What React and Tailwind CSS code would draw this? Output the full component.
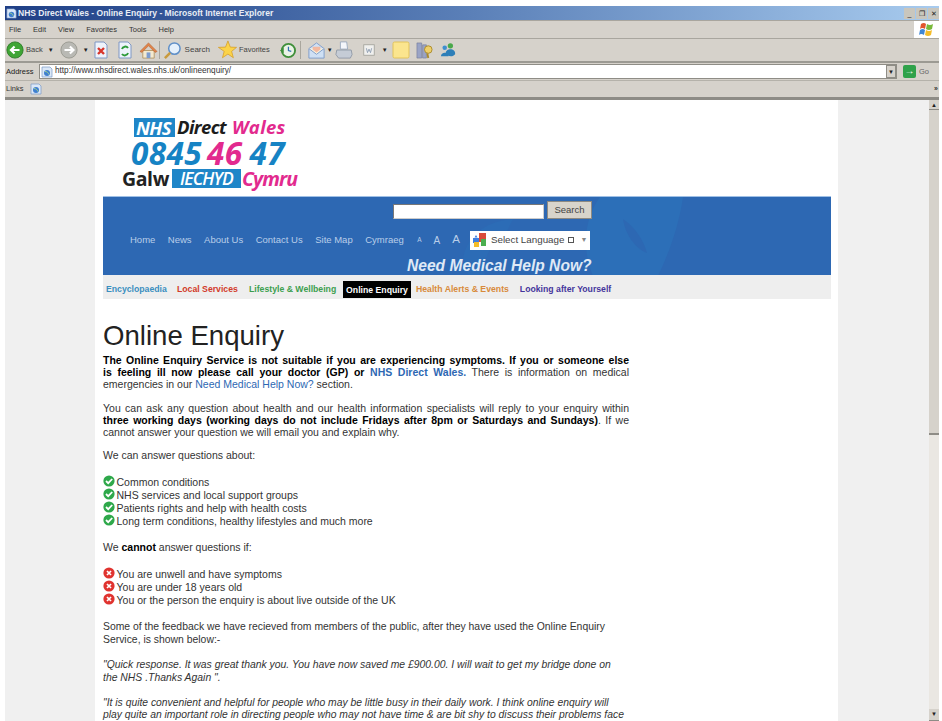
import React from "react";

const sans = "font-['Liberation_Sans',Arial,sans-serif]";

// Browser toolbar glyphs
const BackIcon = ({ disabled }) => (
  <svg width="18" height="18" viewBox="0 0 20 20">
    <circle cx="10" cy="10" r="9" fill={disabled ? "#b9b9b4" : "#3fa535"} stroke={disabled ? "#97978f" : "#2c7a27"} />
    <path d={disabled ? "M5 10h9M11 6l4 4-4 4" : "M15 10H6M9.5 6l-4 4 4 4"} stroke="#fff" strokeWidth="2.4" fill="none" />
  </svg>
);
const PageIcon = ({ color, kind }) => (
  <svg width="16" height="18" viewBox="0 0 16 18">
    <path d="M2 1h9l3 3v13H2z" fill="#eef3fb" stroke="#7f97c4" />
    {kind === "x" ? (
      <path d="M5 7l6 6M11 7l-6 6" stroke={color} strokeWidth="2.4" />
    ) : (
      <path d="M5 8a3.4 3.4 0 0 1 6-1M11 12a3.4 3.4 0 0 1-6 1" stroke={color} strokeWidth="2" fill="none" />
    )}
  </svg>
);
const HomeIcon = () => (
  <svg width="19" height="19" viewBox="0 0 20 20">
    <path d="M4 10v8h12v-8z" fill="#f4ead0" stroke="#b59a6a" />
    <path d="M1 11l9-9 9 9-2 1-7-7-7 7z" fill="#e2844a" stroke="#b3602e" strokeWidth=".6" />
    <rect x="8" y="12" width="4" height="6" fill="#7d9ccf" />
  </svg>
);
const SearchIcon = () => (
  <svg width="19" height="19" viewBox="0 0 20 20">
    <circle cx="12" cy="8" r="6" fill="#e5f0fb" stroke="#5f8fc8" strokeWidth="1.6" />
    <path d="M7.5 12.5L2 18" stroke="#c99a3c" strokeWidth="2.6" />
  </svg>
);
const StarIcon = () => (
  <svg width="20" height="20" viewBox="0 0 22 22">
    <path d="M12 1l2.6 6.8 6.9.3-5.4 4.4 1.9 7-6-4-6 4 1.9-7L1.5 8.1l7.9-.3z" fill="#fbd34a" stroke="#d39a25" strokeWidth=".8" />
  </svg>
);
const HistoryIcon = () => (
  <svg width="17" height="17" viewBox="0 0 18 18">
    <circle cx="10" cy="9" r="7" fill="#eaf3e6" stroke="#3f8f3a" strokeWidth="2" />
    <path d="M10 5v4l3 1" stroke="#2f6fb0" strokeWidth="1.3" fill="none" />
    <path d="M1 9l4-3v6z" fill="#3f8f3a" />
  </svg>
);
const MailIcon = () => (
  <svg width="19" height="19" viewBox="0 0 20 20">
    <path d="M2 8l8-6 8 6v10H2z" fill="#cfe0f4" stroke="#7f9dc9" />
    <path d="M2 8l8 6 8-6" fill="#f7f1dd" stroke="#7f9dc9" />
    <path d="M6 6h8v3l-4 3-4-3z" fill="#f3b9a0" />
  </svg>
);
const PrintIcon = () => (
  <svg width="18" height="18" viewBox="0 0 20 20">
    <path d="M6 1h7l1 8H6z" fill="#f4f6fa" stroke="#9aa8bd" />
    <path d="M2 10h16l1 5-2 4H4l-3-4z" fill="#c5ccd6" stroke="#8f98a6" />
  </svg>
);
const WordIcon = () => (
  <svg width="14" height="14" viewBox="0 0 16 16">
    <rect x="2" y="2" width="12" height="12" fill="#f0f0ee" stroke="#a4a49c" />
    <path d="M5 6l1.3 5 1.7-4 1.7 4L11 6" stroke="#8a9ab0" fill="none" />
  </svg>
);
const NoteIcon = () => (
  <svg width="18" height="18" viewBox="0 0 18 18">
    <rect x="1" y="1" width="16" height="16" rx="1.5" fill="#fbe58e" stroke="#e2c35a" />
  </svg>
);
const ResearchIcon = () => (
  <svg width="17" height="19" viewBox="0 0 18 20">
    <path d="M1 2h5v16H1zM7 4h4v14H7z" fill="#9aa4c6" stroke="#6d7697" strokeWidth=".6" />
    <circle cx="13" cy="9" r="4" fill="#efd06a" stroke="#a98a2c" />
    <path d="M12 13l1 5" stroke="#a98a2c" strokeWidth="2" />
  </svg>
);
const MessengerIcon = () => (
  <svg width="17" height="17" viewBox="0 0 18 18">
    <circle cx="5" cy="6" r="2.4" fill="#3f8fd0" />
    <circle cx="11" cy="4" r="2.8" fill="#4aa84a" />
    <path d="M1 15c0-5 8-5 8 0zM6 12c0-6 11-6 10 1-2 3-8 3-10-1z" fill="#2e7fb8" />
  </svg>
);
const PageGlobe = ({ size = 12 }) => (
  <svg width={size} height={size} viewBox="0 0 12 12">
    <path d="M1 1h8l2 2v8H1z" fill="#dbe8f8" stroke="#7a98c6" strokeWidth=".7" />
    <circle cx="6" cy="7" r="3" fill="#3f7fd0" />
    <path d="M4 5.5c2 0 3 1 4 3" stroke="#9fd28a" strokeWidth="1" fill="none" />
  </svg>
);
const FlagIcon = () => (
  <svg width="17" height="17" viewBox="0 0 17 17">
    <path d="M3 3q3-2 5 0l-1 5q-3-2-5 0z" fill="#e2552d" />
    <path d="M9 3q3 2 6 0l-1 5q-3 2-6 0z" fill="#79b93a" />
    <path d="M2 9q3-2 5 0l-1 5q-3-2-5 0z" fill="#3f86d4" />
    <path d="M8 9q3 2 6 0l-1 5q-3 2-6 0z" fill="#f4bc2a" />
  </svg>
);
const GoogleMark = () => (
  <svg width="14" height="14" viewBox="0 0 14 14">
    <rect x="6" y="0" width="7" height="9" fill="#d94b3a" />
    <rect x="8" y="6" width="5" height="7" fill="#4caf50" />
    <rect x="0" y="5" width="6" height="5" fill="#3f7fe0" />
    <rect x="1" y="9" width="5" height="5" fill="#f4bc2a" />
    <path d="M3 2l1.5 2.5h-3z" fill="#3f7fe0" />
  </svg>
);
const Check = () => (
  <svg width="12" height="12" viewBox="0 0 12 12" className="shrink-0">
    <circle cx="6" cy="6" r="5.6" fill="#2ea84a" />
    <path d="M3 6l2.2 2.2L9.2 4" stroke="#fff" strokeWidth="1.8" fill="none" />
  </svg>
);
const Cross = () => (
  <svg width="12" height="12" viewBox="0 0 12 12" className="shrink-0">
    <circle cx="6" cy="6" r="5.6" fill="#e0332f" />
    <path d="M4 4l4 4M8 4l-4 4" stroke="#fff" strokeWidth="1.7" />
  </svg>
);
const Caret = () => <span className="text-[6px] text-[#222] leading-none">▼</span>;

// One fully justified line of a paragraph
const Line = ({ children }) => (
  <span className="block whitespace-nowrap text-justify [text-align-last:justify]">{children}</span>
);

function TitleBar() {
  return (
    <div className="h-[14px] flex items-center bg-gradient-to-r from-[#1f3f86] via-[#5b80b8] to-[#a8cbee] shrink-0">
      <span className="ml-[1px] mr-[1px]"><PageGlobe size={11} /></span>
      <span className="text-[8.5px] font-bold text-[#e9edf5] leading-none whitespace-nowrap">NHS Direct Wales - Online Enquiry - Microsoft Internet Explorer</span>
      <div className="ml-auto flex gap-[1px] mr-0">
        {["_", "❐", "✕"].map((c) => (
          <span key={c} className="w-[11px] h-[11px] bg-[#c9c6bd] text-[7px] leading-[11px] text-center text-[#222]">{c}</span>
        ))}
      </div>
    </div>
  );
}

function MenuBar() {
  return (
    <div className="h-[19px] flex items-center bg-[#d6d2cb] border-t border-b border-[#a9a69e] shrink-0 text-[7.5px] text-[#333]">
      <div className="flex gap-[12px] pl-[4px] pt-[1px]">
        {["File", "Edit", "View", "Favorites", "Tools", "Help"].map((m) => <span key={m}>{m}</span>)}
      </div>
      <div className="ml-auto w-[25px] h-full bg-white flex items-center justify-center"><FlagIcon /></div>
    </div>
  );
}

function ToolBar() {
  return (
    <div className="h-[24px] flex items-center bg-[#d6d2cb] border-b-2 border-[#9c9a93] shrink-0 text-[7.5px] text-[#444] pl-[1px]">
      <BackIcon /><span className="ml-[2px]">Back</span><span className="ml-[5px]"><Caret /></span>
      <span className="ml-[6px]"><BackIcon disabled /></span><span className="ml-[5px] text-[#999]"><Caret /></span>
      <span className="ml-[4px]"><PageIcon color="#d8362c" kind="x" /></span>
      <span className="ml-[8px]"><PageIcon color="#2e9a3a" /></span>
      <span className="ml-[6px]"><HomeIcon /></span>
      <span className="ml-[1px] w-px h-[18px] bg-[#a9a69e]" />
      <span className="ml-[3px]"><SearchIcon /></span><span className="ml-[3px] text-[8px]">Search</span>
      <span className="ml-[7px]"><StarIcon /></span><span className="ml-[2px]">Favorites</span>
      <span className="ml-[9px]"><HistoryIcon /></span>
      <span className="ml-[4px] w-px h-[18px] bg-[#a9a69e]" />
      <span className="ml-[6px]"><MailIcon /></span><span className="ml-[1px]"><Caret /></span>
      <span className="ml-[2px]"><PrintIcon /></span>
      <span className="ml-[9px]"><WordIcon /></span>
      <span className="ml-[6px]"><Caret /></span>
      <span className="ml-[4px]"><NoteIcon /></span>
      <span className="ml-[6px]"><ResearchIcon /></span>
      <span className="ml-[7px]"><MessengerIcon /></span>
    </div>
  );
}

function AddressBar() {
  return (
    <div className="h-[17px] flex items-center bg-[#d6d2cb] shrink-0 text-[7.5px] text-[#222]">
      <span className="w-[34px] pl-[1px]">Address</span>
      <div className="flex-1 h-[15px] bg-white border border-[#8f8d86] flex items-center gap-[2px] pl-[1px] pr-0 text-[8.2px] text-[#333]">
        <PageGlobe />
        <span>http://www.nhsdirect.wales.nhs.uk/onlineenquiry/</span>
        <span className="ml-auto w-[10px] h-full bg-[#d6d2cb] border border-[#8f8d86] flex items-center justify-center"><Caret /></span>
      </div>
      <span className="ml-[6px] w-[13px] h-[13px] bg-[#2fa24a] rounded-[2px] text-white text-[10px] font-bold leading-[12px] text-center">→</span>
      <span className="ml-[3px] w-[20px] text-[#666]">Go</span>
    </div>
  );
}

function LinksBar() {
  return (
    <div className="h-[20px] flex items-center bg-[#d6d2cb] border-t border-[#b5b2aa] border-b-[3px] border-b-[#8e8c86] shrink-0 text-[7.5px] text-[#333] pl-[1px] gap-[6px]">
      <span>Links</span><PageGlobe />
      <span className="ml-auto mr-[1px] text-[7px] font-bold">»</span>
    </div>
  );
}

function Logo() {
  return (
    <div className="h-[96px] w-[210px] pl-[27px] pt-[18px] italic font-['Open_Sans','Liberation_Sans',sans-serif] font-bold whitespace-nowrap">
      <div className="flex items-center h-[19px] ml-[12px] text-[18.5px] leading-none tracking-[-0.6px]">
        <span className="bg-[#1f86c8] text-white px-[2px] leading-[19px] w-[41px]">NHS</span>
        <span className="text-[#1c1c1c] ml-[2px]">Direct</span>
        <span className="text-[#e22a8e] ml-[6px] tracking-[0.3px]">Wales</span>
      </div>
      <div className="h-[31px] ml-[9px] flex items-center text-[31.5px] leading-none text-[#1683c4] tracking-[0.4px]">
        0845<span className="text-[#e22a8e] ml-[5px]">46</span><span className="ml-[7px]">47</span>
      </div>
      <div className="flex items-center h-[19px] mt-[1px] text-[19.5px] leading-none">
        <span className="text-[#222] not-italic tracking-[-0.4px]">Galw</span>
        <span className="bg-[#1f86c8] text-white font-semibold ml-[3px] w-[69px] text-center text-[17.5px] leading-[19px] tracking-[-0.9px]">IECHYD</span>
        <span className="text-[#e22a8e] ml-[1px] tracking-[-0.9px]">Cymru</span>
      </div>
    </div>
  );
}

function Banner() {
  const links = ["Home", "News", "About Us", "Contact Us", "Site Map", "Cymraeg"];
  return (
    <div className="relative h-[79px] bg-[#2d68b3] overflow-hidden border-t border-[#9fc0e6]">
      {/* faint ribbon watermark behind the header links */}
      <svg className="absolute left-[350px] top-0" width="240" height="79" viewBox="0 0 240 79">
        <path d="M147 0L230 0C226 30 214 60 205 79H140C128 50 132 20 147 0z" fill="#2c6fb8" />
        <path d="M170 22c12 8 21 22 24 34-13-5-22-20-24-34z" fill="#2d68b3" />
        <path d="M10 62C14 40 30 25 60 22L50 42C38 46 30 60 32 79H16z" fill="#2c6cb6" />
      </svg>
      <div className="relative flex flex-col h-full">
        <div className="flex items-end h-[22px] pl-[290px] pt-[3px]">
          <div className="w-[151px] h-[15px] bg-white border border-[#777] border-b-[#ccc] border-r-[#ccc]" />
          <button className="ml-[3px] w-[45px] h-[18px] bg-[#d8d4cb] border border-[#8d8a82] text-[9.5px] text-[#444] leading-none">Search</button>
        </div>
        <div className="flex items-center h-[38px] pt-[4px] pl-[27px] text-[9.5px] text-[#b9cee9] whitespace-nowrap">
          {links.map((l) => <span key={l} className="mr-[12.5px]">{l}</span>)}
          <span className="ml-[1px] text-[6.5px]">A</span>
          <span className="ml-[12px] text-[10px]">A</span>
          <span className="ml-[12px] text-[11.5px]">A</span>
          <div className="ml-[10px] w-[120px] h-[19px] bg-white flex items-center pl-[3px] text-[9.8px] text-[#444]">
            <GoogleMark />
            <span className="ml-[4px]">Select Language</span>
            <span className="ml-[4px] w-[6px] h-[6px] border border-[#555]" />
            <span className="ml-[6px] text-[7px] text-[#888]">▼</span>
          </div>
        </div>
        <div className="text-[15.6px] leading-[17px] font-bold italic text-[#dfe9f6] pl-[304px] whitespace-nowrap">Need Medical Help Now?</div>
      </div>
    </div>
  );
}

function SectionNav() {
  const items = [
    ["Encyclopaedia", "text-[#3a8fc0] w-[71px]"],
    ["Local Services", "text-[#d23a2a] w-[72px]"],
    ["Lifestyle & Wellbeing", "text-[#3c9e4e] w-[94px]"],
  ];
  return (
    <div className="h-[24px] pt-[6px] bg-[#eeeeee] flex items-center pl-[3px] text-[8.7px] font-bold whitespace-nowrap">
      {items.map(([t, c]) => <span key={t} className={c}>{t}</span>)}
      <span className="bg-black text-white h-[17px] -mt-[2px] leading-[19px] w-[68px] text-center">Online Enquiry</span>
      <span className="text-[#d88a3a] ml-[5px]">Health Alerts &amp; Events</span>
      <span className="text-[#45359c] ml-[11px]">Looking after Yourself</span>
    </div>
  );
}

function Article() {
  return (
    <div className="pl-[8px] w-[534px] text-[10.5px] leading-[13px] text-[#333]">
      <h1 className="text-[27.6px] leading-[30px] text-[#222] font-normal pt-[22px] pb-[3px]">Online Enquiry</h1>
      <p className="leading-[12px]">
        <Line><b className="text-black">The Online Enquiry Service is not suitable if you are experiencing symptoms. If you or someone else</b></Line>
        <Line><b className="text-black">is feeling ill now please call your doctor (GP) or <span className="text-[#2d68b3]">NHS Direct Wales.</span></b> There is information on medical</Line>
        <span className="block">emergencies in our <span className="text-[#2d68b3]">Need Medical Help Now?</span> section.</span>
      </p>
      <p className="mt-[12px] leading-[12px]">
        <Line>You can ask any question about health and our health information specialists will reply to your enquiry within</Line>
        <Line><b className="text-black">three working days (working days do not include Fridays after 8pm or Saturdays and Sundays)</b>. If we</Line>
        <span className="block">cannot answer your question we will email you and explain why.</span>
      </p>
      <p className="mt-[11px]">We can answer questions about:</p>
      <ul className="mt-[14px]">
        {["Common conditions", "NHS services and local support groups", "Patients rights and help with health costs", "Long term conditions, healthy lifestyles and much more"].map((t) => (
          <li key={t} className="flex items-start gap-[1.5px] h-[13px]"><span className="-mt-[1px]"><Check /></span>{t}</li>
        ))}
      </ul>
      <p className="mt-[13px]">We <b className="text-black">cannot</b> answer questions if:</p>
      <ul className="mt-[14px]">
        {["You are unwell and have symptoms", "You are under 18 years old", "You or the person the enquiry is about live outside of the UK"].map((t) => (
          <li key={t} className="flex items-start gap-[1.5px] h-[13px]"><span className="-mt-[1px]"><Cross /></span>{t}</li>
        ))}
      </ul>
      <p className="mt-[13px] w-[510px] text-[10.4px]">Some of the feedback we have recieved from members of the public, after they have used the Online Enquiry Service, is shown below:-</p>
      <p className="mt-[12px] italic w-[515px] text-[10.4px]">"Quick response. It was great thank you. You have now saved me £900.00. I will wait to get my bridge done on the NHS .Thanks Again ".</p>
      <p className="mt-[13px] italic leading-[12px] text-[10.35px]">"It is quite convenient and helpful for people who may be little busy in their daily work. I think online enquiry will play quite an important role in directing people who may not have time &amp; are bit shy to discuss their problems face to face with a doctor."</p>
    </div>
  );
}

export default function App() {
  return (
    <div className={`${sans} h-[721px] overflow-hidden bg-white pt-[6px] pl-[5px] pr-[3px] flex flex-col`}>
      <TitleBar />
      <MenuBar />
      <ToolBar />
      <AddressBar />
      <LinksBar />
      <div className="flex-1 min-h-0 flex">
        <div className="w-[90px] bg-[#f0f0f0] shrink-0" />
        <main className="w-[743px] bg-white overflow-hidden shrink-0">
          <Logo />
          <div className="ml-[8px] w-[728px]">
            <Banner />
            <SectionNav />
          </div>
          <Article />
        </main>
        <div className="flex-1 bg-[#f0f0f0]" />
        <div className="w-[10px] bg-[#eae7e2] flex flex-col shrink-0">
          <div className="h-[10px] bg-[#d6d2cb] border-b border-[#8e8c86] text-[6px] leading-[10px] text-center text-[#222]">▲</div>
          <div className="h-[325px] bg-[#d6d2cb] border-b-2 border-[#8e8c86]" />
          <div className="mt-auto h-[12px] bg-[#d6d2cb] border-b border-[#8e8c86] text-[6px] leading-[10px] text-center text-[#222]">▼</div>
        </div>
      </div>
    </div>
  );
}
